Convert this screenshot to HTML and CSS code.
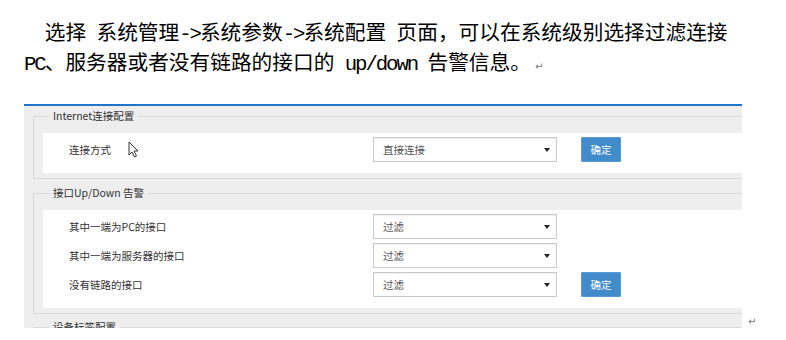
FILE: index.html
```html
<!DOCTYPE html>
<html lang="zh-CN">
  <head>
    <title>系统配置</title>
    <meta charset="utf-8" />
    <meta name="viewport" content="width=device-width, initial-scale=1" />

    <link rel="stylesheet" href="styles.css">
  </head>

  <body>
    <div class="doc">
      <p class="intro">选择<span class="lat"> </span>系统管理<span class="lat">-&gt;</span>系统参数<span class="lat">-&gt;</span>系统配置<span class="lat"> </span>页面，可以在系统级别选择过滤连接<br /><span class="lat">PC</span>、服务器或者没有链路的接口的<span class="lat"> up/down </span>告警信息。<span class="mark">↵</span></p>

      <div class="figure">
        <div class="shot">
          <fieldset class="group first">
            <legend>Internet连接配置</legend>
            <div class="panel">
              <div class="row">
                <span class="label">连接方式
                  <svg class="cursor" width="11" height="17" viewBox="0 0 11 17">
                    <path d="M1 1 V14 L4 11 L6.5 16 L8.5 15 L6 10 H10 Z" fill="#fff" stroke="#333" stroke-width="1" stroke-linejoin="round" />
                  </svg>
                </span>
                <div class="select">直接连接</div>
                <button class="btn">确定</button>
              </div>
            </div>
          </fieldset>

          <fieldset class="group">
            <legend>接口Up/Down 告警</legend>
            <div class="panel">
              <div class="row">
                <span class="label">其中一端为PC的接口</span>
                <div class="select">过滤</div>
              </div>
              <div class="row">
                <span class="label">其中一端为服务器的接口</span>
                <div class="select">过滤</div>
              </div>
              <div class="row">
                <span class="label">没有链路的接口</span>
                <div class="select">过滤</div>
                <button class="btn">确定</button>
              </div>
            </div>
          </fieldset>

          <fieldset class="group last">
            <legend>设备标签配置</legend>
            <div class="panel"></div>
          </fieldset>
        </div>
        <span class="mark">↵</span>
      </div>
    </div>
  </body>
</html>
```

FILE: styles.css
```css
body {
  margin: 0;
  background: #fff;
  font-family: "Noto Sans CJK SC", sans-serif;
}

.doc {
  padding: 16px 0 0 24px;
}

.intro {
  margin: 0;
  font-size: 20.7px;
  line-height: 30px;
  text-indent: 1em;
  color: #000;
  white-space: nowrap;
}

.lat {
  font-family: "Liberation Mono", monospace;
  font-size: 20.7px;
  line-height: 20px;
  letter-spacing: -2.07px;
  white-space: pre;
}

.mark {
  font-family: "DejaVu Sans", sans-serif;
  font-size: 10px;
  line-height: 12px;
  color: #777;
  margin-left: 4px;
}

.figure {
  display: flex;
  align-items: flex-end;
  margin-top: 28px;
}

.figure .mark {
  margin-left: 6px;
}

.shot {
  width: 718px;
  height: 222px;
  overflow: hidden;
  background: #eeeeee;
  border-top: 2px solid #1f74c9;
}

.group {
  width: 760px;
  min-width: 0;
  margin: 7px 0 0 9px;
  padding: 10px 0 5px 9px;
  border: 1px solid #d9d9d9;
}

.group.first {
  margin-top: 3px;
}

.group.last {
  margin-top: 6px;
}

.group legend {
  margin-left: 6px;
  padding: 0 4px;
  font-size: 10.5px;
  line-height: 14px;
  color: #333;
}

.panel {
  background: #fff;
  padding: 4px 0 11px 26px;
}

.row {
  display: flex;
  align-items: center;
  height: 25px;
}

.row + .row {
  margin-top: 4px;
}

.label {
  display: flex;
  align-items: center;
  flex: none;
  width: 304px;
  font-size: 10.5px;
  color: #333;
}

.cursor {
  margin-left: 17px;
}

.select {
  display: flex;
  align-items: center;
  flex: none;
  box-sizing: border-box;
  width: 184px;
  height: 25px;
  padding: 0 6px 0 9px;
  background: #fff;
  border: 1px solid #c9c9c9;
  box-shadow: inset 0 1px 1px rgba(0, 0, 0, 0.06);
  font-size: 10.5px;
  color: #555;
}

.select::after {
  content: "";
  margin-left: auto;
  border-left: 3.5px solid transparent;
  border-right: 3.5px solid transparent;
  border-top: 4px solid #222;
}

.btn {
  flex: none;
  box-sizing: border-box;
  width: 40px;
  height: 25px;
  margin-left: 24px;
  padding: 0;
  background: #428bca;
  border: 1px solid #5a9bd5;
  border-radius: 1px;
  color: #fff;
  font-family: "Noto Sans CJK SC", sans-serif;
  font-size: 10.5px;
}
```
